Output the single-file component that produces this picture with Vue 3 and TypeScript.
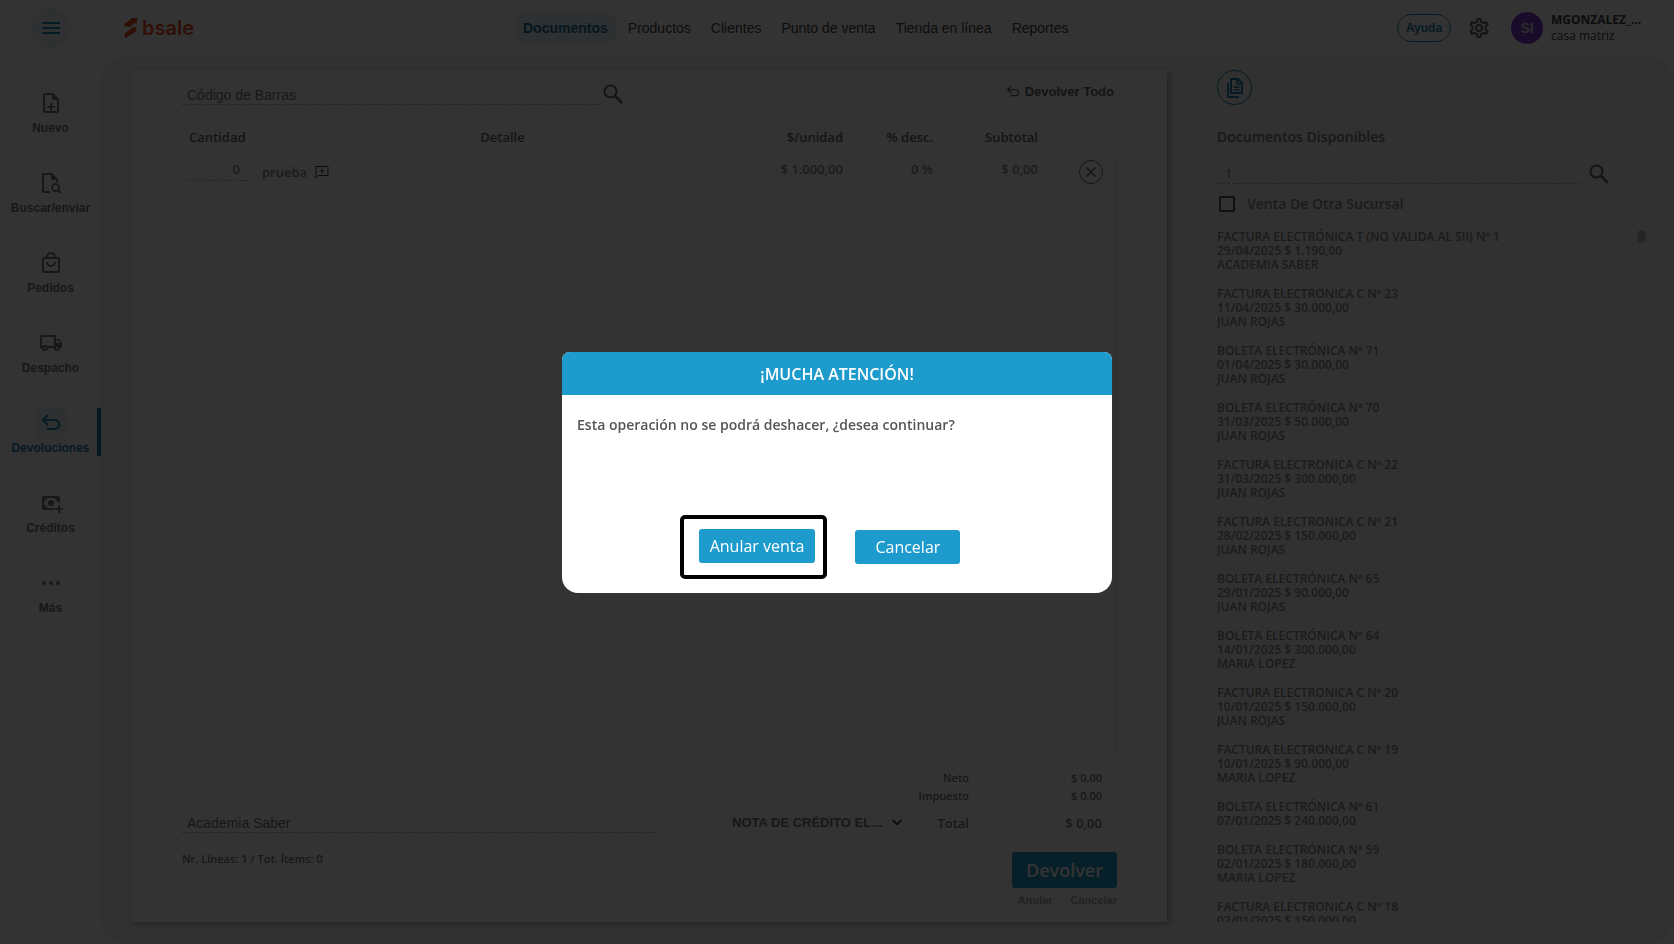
<script setup lang="ts">
import { ref } from 'vue'

interface SideItem {
  label: string
  icon: string
  active?: boolean
}

interface SaleDocument {
  title: string
  detail: string
  client?: string
}

const sideItems: SideItem[] = [
  { label: 'Nuevo', icon: 'new' },
  { label: 'Buscar/enviar', icon: 'find' },
  { label: 'Pedidos', icon: 'bag' },
  { label: 'Despacho', icon: 'truck' },
  { label: 'Devoluciones', icon: 'undo', active: true },
  { label: 'Créditos', icon: 'money' },
  { label: 'Más', icon: 'more' },
]

const icons: Record<string, string> = {
  new: 'M14 2H6c-1.100 0-2 .9-2 2v16c0 1.100.9 2 2 2h12c1.100 0 2-.9 2-2V8l-6-6zM6 20V4h7v5h5v11H6zm5-8v3H8v2h3v3h2v-3h3v-2h-3v-3h-2z',
  find: 'M5 22c-1.100 0-2-.9-2-2V4c0-1.100.9-2 2-2h8l6 6v3h-2V9h-5V4H5v16h6v2H5zM16.500 12a4.500 4.500 0 1 0 2.300 8.400L21.600 23 23 21.600l-2.700-2.700A4.500 4.500 0 0 0 16.500 12zm0 2a2.500 2.500 0 1 1 0 5 2.500 2.500 0 0 1 0-5z',
  bag: 'M19 6h-2a5 5 0 0 0-10 0H5c-1.100 0-2 .9-2 2v12c0 1.100.9 2 2 2h14c1.100 0 2-.9 2-2V8c0-1.100-.9-2-2-2zm-7-3a3 3 0 0 1 3 3H9a3 3 0 0 1 3-3zm7 17H5V8h14v12zm-7-6a3 3 0 0 1-3-3H7a5 5 0 0 0 10 0h-2a3 3 0 0 1-3 3z',
  truck: 'M20 8h-3V4H3c-1.100 0-2 .9-2 2v11h2a3 3 0 0 0 6 0h6a3 3 0 0 0 6 0h2v-5l-3-4zm-.500 1.500 2 2.500H17V9.500h2.500zM6 18a1 1 0 1 1 0-2 1 1 0 0 1 0 2zm2.200-3a3 3 0 0 0-4.400 0H3V6h12v9H8.200zm9.800 3a1 1 0 1 1 0-2 1 1 0 0 1 0 2z',
  undo: 'M8 19v-2h7.500c2.200 0 3.800-1.400 3.800-3.500S17.700 10 15.500 10H6.300l3.600 3.600L8.500 15l-6-6 6-6 1.400 1.400L6.300 8h9.200c3.300 0 5.800 2.300 5.800 5.500S18.800 19 15.500 19H8z',
  money: 'M5 5h14a2 2 0 0 1 2 2v5h-2v-1.500a4 4 0 0 1-3-3.500H8a4 4 0 0 1-3 3.500v3A4 4 0 0 1 8 17h7v2H5a2 2 0 0 1-2-2V7a2 2 0 0 1 2-2zm7 4a3 3 0 1 1 0 6 3 3 0 0 1 0-6zM19 14h2v3h3v2h-3v3h-2v-3h-3v-2h3z',
  more: 'M5 10a2 2 0 1 0 0 4 2 2 0 0 0 0-4zm7 0a2 2 0 1 0 0 4 2 2 0 0 0 0-4zm7 0a2 2 0 1 0 0 4 2 2 0 0 0 0-4z',
}

const navItems = ['Documentos', 'Productos', 'Clientes', 'Punto de venta', 'Tienda en línea', 'Reportes']

const documents: SaleDocument[] = [
  { title: 'FACTURA ELECTRÓNICA T (NO VALIDA AL SII) Nº 1', detail: '29/04/2025 $ 1.190,00', client: 'ACADEMIA SABER' },
  { title: 'FACTURA ELECTRONICA C Nº 23', detail: '11/04/2025 $ 30.000,00', client: 'JUAN ROJAS' },
  { title: 'BOLETA ELECTRÓNICA Nº 71', detail: '01/04/2025 $ 30.000,00', client: 'JUAN ROJAS' },
  { title: 'BOLETA ELECTRÓNICA Nº 70', detail: '31/03/2025 $ 50.000,00', client: 'JUAN ROJAS' },
  { title: 'FACTURA ELECTRONICA C Nº 22', detail: '31/03/2025 $ 300.000,00', client: 'JUAN ROJAS' },
  { title: 'FACTURA ELECTRONICA C Nº 21', detail: '28/02/2025 $ 150.000,00', client: 'JUAN ROJAS' },
  { title: 'BOLETA ELECTRÓNICA Nº 65', detail: '29/01/2025 $ 90.000,00', client: 'JUAN ROJAS' },
  { title: 'BOLETA ELECTRÓNICA Nº 64', detail: '14/01/2025 $ 300.000,00', client: 'MARIA LOPEZ' },
  { title: 'FACTURA ELECTRONICA C Nº 20', detail: '10/01/2025 $ 150.000,00', client: 'JUAN ROJAS' },
  { title: 'FACTURA ELECTRONICA C Nº 19', detail: '10/01/2025 $ 90.000,00', client: 'MARIA LOPEZ' },
  { title: 'BOLETA ELECTRÓNICA Nº 61', detail: '07/01/2025 $ 240.000,00' },
  { title: 'BOLETA ELECTRÓNICA Nº 59', detail: '02/01/2025 $ 180.000,00', client: 'MARIA LOPEZ' },
  { title: 'FACTURA ELECTRONICA C Nº 18', detail: '02/01/2025 $ 150.000,00' },
]

const barcode = ref('')
const quantity = ref('0')
const customer = ref('Academia Saber')
const search = ref('1')
const otherBranch = ref(false)
</script>

<template>
  <div class="app">
    <header class="topbar">
      <div class="menu-slot">
        <button class="menu" type="button" aria-label="Menú">
          <svg viewBox="0 0 18 12" width="18" height="12"><path d="M0 1h18M0 6h18M0 11h18" stroke="currentColor" stroke-width="2" /></svg>
        </button>
      </div>
      <a class="logo" href="#">
        <svg viewBox="0 0 14 22" width="14" height="22" fill="currentColor">
          <path d="M.5 6.500 6.500 2.500 7.500 1 13.500 1 12.500 7 11 6 5.500 10 .8 9.500zM.5 16.500 8.500 10.500 10.500 10 12.500 11.500 11.500 15 1 21.500z" />
        </svg>
        <span>bsale</span>
      </a>
      <nav class="nav">
        <a v-for="(item, i) in navItems" :key="item" href="#" :class="{ current: i === 0 }">{{ item }}</a>
      </nav>
      <div class="account">
        <button class="help" type="button">Ayuda</button>
        <button class="plain gear" type="button" aria-label="Configuración">
          <svg viewBox="0 0 24 24" width="24" height="24" fill="currentColor"><path d="M19.430 12.980c.04-.32.07-.64.07-.98s-.03-.66-.07-.98l2.110-1.650c.19-.15.24-.42.12-.64l-2-3.460a.5.5 0 0 0-.61-.22l-2.490 1c-.52-.4-1.080-.73-1.690-.98l-.38-2.650A.49.49 0 0 0 14 2h-4c-.25 0-.46.18-.49.42l-.38 2.650c-.61.25-1.170.59-1.690.98l-2.490-1a.5.5 0 0 0-.61.22l-2 3.460c-.13.22-.07.49.12.64l2.110 1.650c-.04.32-.07.65-.07.98s.03.66.07.98l-2.110 1.650c-.19.15-.24.42-.12.64l2 3.460c.12.22.38.3.61.22l2.490-1c.52.4 1.080.73 1.690.98l.38 2.650c.03.24.24.42.49.42h4c.25 0 .46-.18.49-.42l.38-2.650c.61-.25 1.170-.59 1.690-.98l2.490 1c.23.08.49 0 .61-.22l2-3.460a.5.5 0 0 0-.12-.64l-2.110-1.650zm-1.980-1.710c.07.53.07.93 0 1.460l-.14 1.130 1.950 1.520-.7 1.210-2.320-.93-.96.73c-.42.32-.83.56-1.240.73l-1.060.43-.35 2.450h-1.300l-.35-2.450-1.060-.43a5.200 5.200 0 0 1-1.230-.71l-.97-.75-2.320.93-.7-1.210 1.950-1.520-.14-1.130a6 6 0 0 1 0-1.460l.14-1.130L4.700 8.620l.7-1.210 2.320.93.96-.73c.42-.32.83-.56 1.240-.73l1.060-.43.35-2.450h1.300l.35 2.450 1.060.43c.43.18.83.41 1.230.71l.97.75 2.320-.93.7 1.210-1.950 1.520zM12 8a4 4 0 1 0 0 8 4 4 0 0 0 0-8zm0 6a2 2 0 1 1 0-4 2 2 0 0 1 0 4z" /></svg>
        </button>
        <span class="avatar">SI</span>
        <div class="user">
          <strong>MGONZALEZ_...</strong>
          <span>casa matriz</span>
        </div>
      </div>
    </header>

    <nav class="sidebar">
      <a v-for="item in sideItems" :key="item.label" href="#" class="side-item" :class="{ active: item.active }">
        <span class="side-icon">
          <svg viewBox="0 0 24 24" width="24" height="24" fill="currentColor"><path :d="icons[item.icon]" /></svg>
        </span>
        <span class="side-label">{{ item.label }}</span>
      </a>
    </nav>

    <main class="workspace">
      <section class="sheet">
        <div class="scan-row">
          <input v-model="barcode" class="line-input barcode" type="text" placeholder="Código de Barras" aria-label="Código de Barras" />
          <button class="plain" type="button" aria-label="Buscar producto">
            <svg viewBox="0 0 20 20" width="20" height="20" fill="none" stroke="currentColor" stroke-width="2"><circle cx="7.500" cy="7.500" r="6" /><path d="M12 12l7 7" stroke-width="2.500" /></svg>
          </button>
          <button class="plain return-all" type="button">
            <svg viewBox="2 2 20 18" width="14" height="12" fill="currentColor"><path :d="icons.undo" /></svg>
            Devolver Todo
          </button>
        </div>

        <div class="lines">
          <table>
            <colgroup>
              <col class="c-qty" /><col /><col class="c-unit" /><col class="c-disc" /><col class="c-sub" /><col class="c-del" />
            </colgroup>
            <thead>
              <tr><th class="left">Cantidad</th><th class="center">Detalle</th><th>$/unidad</th><th>% desc.</th><th>Subtotal</th><th></th></tr>
            </thead>
            <tbody>
              <tr>
                <td class="left"><input v-model="quantity" class="line-input qty" type="text" aria-label="Cantidad" /></td>
                <td class="left">
                  <span class="product">prueba
                    <svg viewBox="0 0 14 14" width="14" height="14" fill="none" stroke="currentColor"><path d="M1 13V1.500h12v9H3z" /><path d="M7 3.500v5M4.500 6h5" /></svg>
                  </span>
                </td>
                <td>$ 1.000,00</td>
                <td>0 %</td>
                <td>$ 0,00</td>
                <td class="delete">
                  <button class="plain" type="button" aria-label="Quitar línea">
                    <svg viewBox="0 0 24 24" width="24" height="24" fill="none" stroke="currentColor"><circle cx="12" cy="12" r="11.500" /><path d="M7.500 7.500l9 9M16.500 7.500l-9 9" stroke-width="1.500" /></svg>
                  </button>
                </td>
              </tr>
            </tbody>
          </table>
          <div class="rail"></div>
        </div>

        <dl class="totals">
          <dt>Neto</dt><dd>$ 0,00</dd>
          <dt>Impuesto</dt><dd>$ 0,00</dd>
        </dl>
        <div class="total-row">
          <input v-model="customer" class="line-input customer" type="text" aria-label="Cliente" />
          <div class="doc-type">
            <select aria-label="Tipo de documento"><option>NOTA DE CRÉDITO EL...</option></select>
            <svg viewBox="0 0 10 7" width="10" height="7" fill="none" stroke="currentColor" stroke-width="1.600"><path d="M.7 1 5 5.300 9.300 1" /></svg>
          </div>
          <span class="total-label">Total</span>
          <span class="total-value">$ 0,00</span>
        </div>
        <div class="finish">
          <p>Nr. Líneas: 1 / Tot. Ítems: 0</p>
          <div class="finish-actions">
            <button class="return" type="button">Devolver</button>
            <div class="links"><a href="#">Anular</a><a href="#">Cancelar</a></div>
          </div>
        </div>
      </section>

      <aside class="available">
        <button class="copy" type="button" aria-label="Documentos">
          <svg viewBox="0 0 16 20" width="16" height="20" fill="none" stroke="currentColor" stroke-width="2"><path d="M4 1h7l4 4v10H4zM1 5v14h11" /><path d="M10 1v5h5M6.500 9h6M6.500 12h6" stroke-width="1.500" /></svg>
        </button>
        <h2>Documentos Disponibles</h2>
        <div class="search-row">
          <input v-model="search" class="line-input" type="text" aria-label="Buscar documento" />
          <button class="plain" type="button" aria-label="Buscar">
            <svg viewBox="0 0 20 20" width="20" height="20" fill="none" stroke="currentColor" stroke-width="2"><circle cx="7.500" cy="7.500" r="6" /><path d="M12 12l7 7" stroke-width="2.500" /></svg>
          </button>
        </div>
        <label class="branch"><input v-model="otherBranch" type="checkbox" />Venta De Otra Sucursal</label>
        <div class="list-wrap">
          <ul>
            <li v-for="doc in documents" :key="doc.title">
              <div>{{ doc.title }}</div>
              <div>{{ doc.detail }}</div>
              <div v-if="doc.client">{{ doc.client }}</div>
            </li>
          </ul>
          <div class="scroll">
            <svg class="thumb" viewBox="0 0 9 13" width="9" height="13"><rect width="9" height="13" rx="4" fill="#c4c4c4" /><path d="M2 4.500h5M2 6.500h5M2 8.500h5" stroke="#999" /></svg>
          </div>
        </div>
      </aside>
    </main>

    <div class="overlay">
      <div class="dialog" role="dialog" aria-modal="true" aria-labelledby="dialog-title">
        <h1 id="dialog-title">¡MUCHA ATENCIÓN!</h1>
        <p>Esta operación no se podrá deshacer, ¿desea continuar?</p>
        <div class="dialog-actions">
          <div class="frame"><button type="button">Anular venta</button></div>
          <button class="cancel" type="button">Cancelar</button>
        </div>
      </div>
    </div>
  </div>
</template>

<style>
body {
  margin: 0;
}
</style>

<style scoped>
.app {
  --blue: #1e9bcd;
  --deep-blue: #1a80aa;
  --sans: "Open Sans", "Noto Sans", sans-serif;
  --arial: "Liberation Sans", Arial, sans-serif;
  display: grid;
  grid-template: 56px minmax(0, 1fr) / 101px minmax(0, 1fr);
  height: 100vh;
  background: #fff;
  color: #777;
  font-family: var(--sans);
  font-size: 13px;
}
* {
  box-sizing: border-box;
}
a {
  color: inherit;
  text-decoration: none;
}
button,
input,
select {
  font: inherit;
  color: inherit;
}
svg {
  display: block;
}
.plain {
  border: 0;
  padding: 0;
  background: none;
  color: #666;
}
.topbar {
  grid-column: 1 / -1;
  display: grid;
  grid-template-columns: 101px 414px auto minmax(0, 1fr);
  align-items: center;
  color: #444;
  font-family: var(--arial);
}
.menu {
  display: grid;
  place-items: center;
  width: 40px;
  height: 40px;
  margin-left: 31px;
  padding: 0;
  border: 0;
  border-radius: 50%;
  background: #e3f1f6;
  color: var(--deep-blue);
}
.logo {
  display: flex;
  align-items: center;
  gap: 4px;
  margin-left: 23px;
  color: #f0501e;
  font: 600 20px/22px Inter, sans-serif;
}
.nav {
  display: flex;
  gap: 4px;
  font-size: 14px;
  line-height: 32px;
  white-space: nowrap;
}
.nav a {
  padding: 0 8px;
  border-radius: 10px;
}
.nav .current {
  background: #e3f1f6;
  color: #17719a;
  font-weight: 700;
}
.account {
  display: flex;
  align-items: center;
  justify-content: flex-end;
  padding-right: 33px;
}
.help {
  width: 54px;
  height: 28px;
  padding: 0;
  border: 1px solid var(--deep-blue);
  border-radius: 14px;
  background: none;
  color: var(--deep-blue);
  font-size: 12px;
  font-weight: 700;
}
.gear {
  margin: 0 20px 0 16px;
}
.avatar {
  width: 32px;
  border-radius: 50%;
  background: #7c3fd0;
  color: #ddd;
  font-size: 14px;
  font-weight: 700;
  line-height: 32px;
  text-align: center;
}
.user {
  display: flex;
  flex-direction: column;
  width: 90px;
  margin-left: 8px;
  font: 12px/16px var(--sans);
  white-space: nowrap;
}
.user strong {
  font-weight: 700;
}
.sidebar {
  padding-top: 24px;
  font: 700 12px/18px var(--arial);
}
.side-item {
  display: flex;
  flex-direction: column;
  align-items: center;
  height: 80px;
  padding-top: 7px;
}
.side-icon {
  display: grid;
  place-items: center;
  width: 32px;
  height: 32px;
  border-radius: 8px;
}
.active {
  color: var(--deep-blue);
  background: linear-gradient(var(--deep-blue), var(--deep-blue)) right 8px / 4px 48px no-repeat;
}
.active .side-icon {
  background: #e3f1f6;
}
.workspace {
  display: flex;
  gap: 50px;
  min-width: 0;
  padding: 14px 27px 22px 30px;
  border-left: 1px solid #ebebeb;
  border-radius: 28px;
  background: #f4f4f4;
}
.sheet {
  display: flex;
  flex: 1;
  flex-direction: column;
  min-width: 0;
  padding: 13px 50px 14px;
  background: #fff;
  box-shadow: 2px 2px 6px rgba(0, 0, 0, 0.3);
}
.line-input {
  min-width: 0;
  padding: 0 5px;
  border: 0;
  border-bottom: 1px dashed #bbb;
  border-radius: 0;
  background: none;
  outline: 0;
}
.scan-row {
  display: flex;
  align-items: center;
}
.barcode {
  width: 418px;
  height: 22px;
  margin-right: 3px;
  padding-top: 2px;
  font: 14px var(--arial);
}
.barcode::placeholder {
  color: #777;
}
.return-all {
  display: flex;
  align-items: center;
  gap: 5px;
  margin: 0 3px 6px auto;
  font: 700 13px var(--arial);
}
.lines {
  display: flex;
  flex: 1;
  margin-top: 20px;
}
table {
  flex: 1;
  align-self: flex-start;
  border-collapse: collapse;
  table-layout: fixed;
}
.c-qty {
  width: 73px;
}
.c-unit {
  width: 93px;
}
.c-disc {
  width: 90px;
}
.c-sub {
  width: 105px;
}
.c-del {
  width: 77px;
}
th,
td {
  padding: 0;
  text-align: right;
  font-weight: 600;
  vertical-align: top;
  line-height: 18px;
}
th {
  height: 35px;
  padding-top: 3px;
  color: #666;
}
td {
  color: #888;
}
.left {
  text-align: left;
}
th.left {
  padding-left: 7px;
}
.center {
  text-align: center;
}
.qty {
  width: 60px;
  height: 20px;
  margin-left: 6px;
  padding: 0 8px 2px 0;
  color: #888;
  text-align: right;
}
.product {
  display: flex;
  align-items: center;
  gap: 8px;
  padding: 3px 0 0 7px;
}
.product svg {
  color: #444;
}
.delete button {
  margin-right: 12px;
}
.rail {
  width: 1px;
  margin: 35px 1px 0 0;
  background: #ddd;
}
.totals {
  display: grid;
  grid-template-columns: 1fr 133px;
  margin: 17px 15px 0 0;
  font-size: 11px;
  font-weight: 600;
  line-height: 18px;
  text-align: right;
}
.totals dd {
  margin: 0;
}
.total-row {
  display: flex;
  align-items: center;
  margin: 7px 15px 0 0;
  font-weight: 600;
}
.customer {
  flex: 1;
  max-width: 474px;
  height: 21px;
  padding-top: 1px;
  font: 14px var(--arial);
}
.doc-type {
  display: flex;
  align-items: center;
  gap: 3px;
  margin-left: auto;
}
select {
  width: 157px;
  padding: 0;
  border: 0;
  background: none;
  appearance: none;
  font: 700 13px/18px var(--arial);
}
.doc-type svg {
  color: #222;
}
.total-label {
  width: 67px;
  text-align: right;
}
.total-value {
  width: 133px;
  text-align: right;
}
.finish {
  display: flex;
  justify-content: space-between;
  margin-top: 19px;
}
.finish p {
  margin: 0;
  font-size: 11px;
  font-weight: 600;
  line-height: 14px;
}
.return {
  display: block;
  width: 105px;
  height: 36px;
  padding: 0;
  border: 0;
  border-radius: 3px;
  background: var(--blue);
  color: #fff;
  font-size: 18px;
  font-weight: 600;
}
.links {
  display: flex;
  justify-content: flex-end;
  gap: 18px;
  margin-top: 4px;
  color: #aaa;
  font: 700 11px/16px var(--arial);
}
.available {
  display: flex;
  flex-direction: column;
  width: 430px;
  min-height: 0;
}
.copy {
  display: grid;
  place-items: center;
  width: 35px;
  height: 35px;
  padding: 0;
  border: 1px solid var(--deep-blue);
  border-radius: 50%;
  background: none;
  color: var(--deep-blue);
}
h2 {
  margin: 22px 0 16px;
  font-size: 14px;
  font-weight: 600;
  line-height: 20px;
}
.search-row {
  display: flex;
  align-items: center;
  gap: 9px;
}
.search-row input {
  width: 363px;
  height: 21px;
  padding-left: 8px;
  color: #888;
}
.branch {
  display: flex;
  align-items: center;
  gap: 12px;
  margin: 10px 0 14px 2px;
  color: #888;
  font-size: 14px;
  font-weight: 600;
  line-height: 20px;
}
.branch input {
  width: 16px;
  height: 16px;
  margin: 0;
  border: 2px solid #555;
  border-radius: 2px;
  appearance: none;
}
.list-wrap {
  display: flex;
  flex: 1;
  justify-content: space-between;
  min-height: 0;
  padding-top: 2px;
  overflow: hidden;
}
ul {
  margin: 0;
  padding: 0;
  list-style: none;
  color: #888;
  font-size: 12px;
  font-weight: 600;
  line-height: 14px;
}
li {
  margin-bottom: 15px;
}
.scroll {
  width: 9px;
  margin-right: 1px;
  background: linear-gradient(#e4e4e4, #e4e4e4) center / 1px 100% no-repeat;
}
.overlay {
  position: fixed;
  inset: 0;
  display: grid;
  place-items: center;
  background: rgba(0, 0, 0, 0.8);
}
.dialog {
  width: 550px;
  padding-bottom: 14px;
  border-radius: 8px 8px 16px 16px;
  background: #fff;
  overflow: hidden;
}
h1 {
  margin: 0;
  padding-top: 1px;
  background: var(--blue);
  color: #fff;
  font-size: 16px;
  font-weight: 600;
  line-height: 42px;
  text-align: center;
}
.dialog p {
  margin: 20px 15px 80px;
  color: #555;
  font-size: 14px;
  font-weight: 600;
  line-height: 20px;
}
.dialog-actions {
  display: flex;
  align-items: center;
  justify-content: center;
  gap: 28px;
  margin-right: 34px;
}
.dialog button {
  height: 34px;
  padding: 0 11px;
  border: 0;
  border-radius: 3px;
  background: var(--blue);
  color: #fff;
  font-size: 16px;
}
.dialog .cancel {
  padding: 0 20px;
}
.frame {
  padding: 10px 8px 12px 15px;
  border: 4px solid #000;
  border-radius: 5px;
}
</style>
